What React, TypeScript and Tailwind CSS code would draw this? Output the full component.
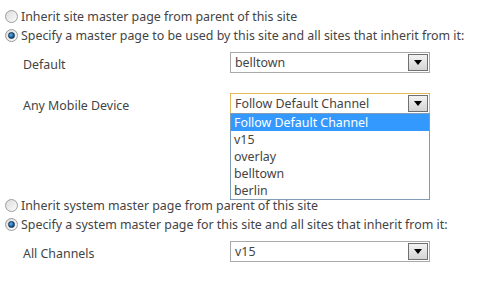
import React from 'react'

const font = { fontFamily: '"Segoe UI", "Noto Sans", "Open Sans", sans-serif' }

const Radio = ({ checked, label }: { checked?: boolean; label: string }) => (
  <div className="flex items-center h-[19px]">
    <span className="w-[13px] h-[13px] rounded-full border border-[#9c9c9c] bg-gradient-to-br from-[#dcdcdc] to-[#fbfbfb] flex items-center justify-center shrink-0">
      {checked && (
        <span className="w-[7px] h-[7px] rounded-full bg-[radial-gradient(circle_at_35%_35%,#5db1ef,#0a4c84_75%)] border border-[#0c2e4f]"></span>
      )}
    </span>
    <span className="ml-[3px] whitespace-nowrap leading-[19px]">{label}</span>
  </div>
)

const Select = ({ value, focused }: { value: string; focused?: boolean }) => (
  <div
    className={`w-[200px] h-[21px] border flex items-center bg-white ${
      focused ? 'border-[#e3b95b]' : 'border-[#a9a9a9]'
    }`}
  >
    <span className="flex-1 pl-[4px] whitespace-nowrap leading-[19px]">{value}</span>
    <span className="w-[20px] h-[17px] mr-[1px] border border-[#707070] bg-gradient-to-b from-[#f2f2f2] to-[#d4d4d4] flex items-center justify-center">
      <svg width="8" height="5" viewBox="0 0 8 5">
        <path d="M0 0h8L4 5z" fill="#000" />
      </svg>
    </span>
  </div>
)

const Row = ({ label, children }: { label: string; children: React.ReactNode }) => (
  <div className="flex h-[21px]">
    <span className="w-[225px] pl-[18px] h-[21px] leading-[25px] whitespace-nowrap">{label}</span>
    {children}
  </div>
)

export default function App() {
  const options = ['Follow Default Channel', 'v15', 'overlay', 'belltown', 'berlin']
  return (
    <div className="w-[490px] h-[290px] bg-white text-[#444] text-[12.4px] pl-[5px] pt-[7px] overflow-hidden" style={font}>
      <Radio label="Inherit site master page from parent of this site" />
      <Radio checked label="Specify a master page to be used by this site and all sites that inherit from it:" />

      <div className="mt-[7px]">
        <Row label="Default">
          <Select value="belltown" />
        </Row>
      </div>

      <div className="mt-[20px]">
        <Row label="Any Mobile Device">
          <div className="relative">
            <Select value="Follow Default Channel" focused />
            {/* Open dropdown list */}
            <div className="absolute left-0 top-[20px] w-[200px] border border-[#7f9db9] bg-white z-10">
              {options.map((o, i) => (
                <div
                  key={o}
                  className={`h-[17px] pl-[3px] leading-[17px] whitespace-nowrap ${
                    i === 0 ? 'bg-[#3399ff] text-white' : ''
                  }`}
                >
                  {o}
                </div>
              ))}
            </div>
          </div>
        </Row>
      </div>

      <div className="mt-[82px]">
        <Radio label="Inherit system master page from parent of this site" />
        <Radio checked label="Specify a system master page for this site and all sites that inherit from it:" />
      </div>

      <div className="mt-[7px]">
        <Row label="All Channels">
          <Select value="v15" />
        </Row>
      </div>
    </div>
  )
}
